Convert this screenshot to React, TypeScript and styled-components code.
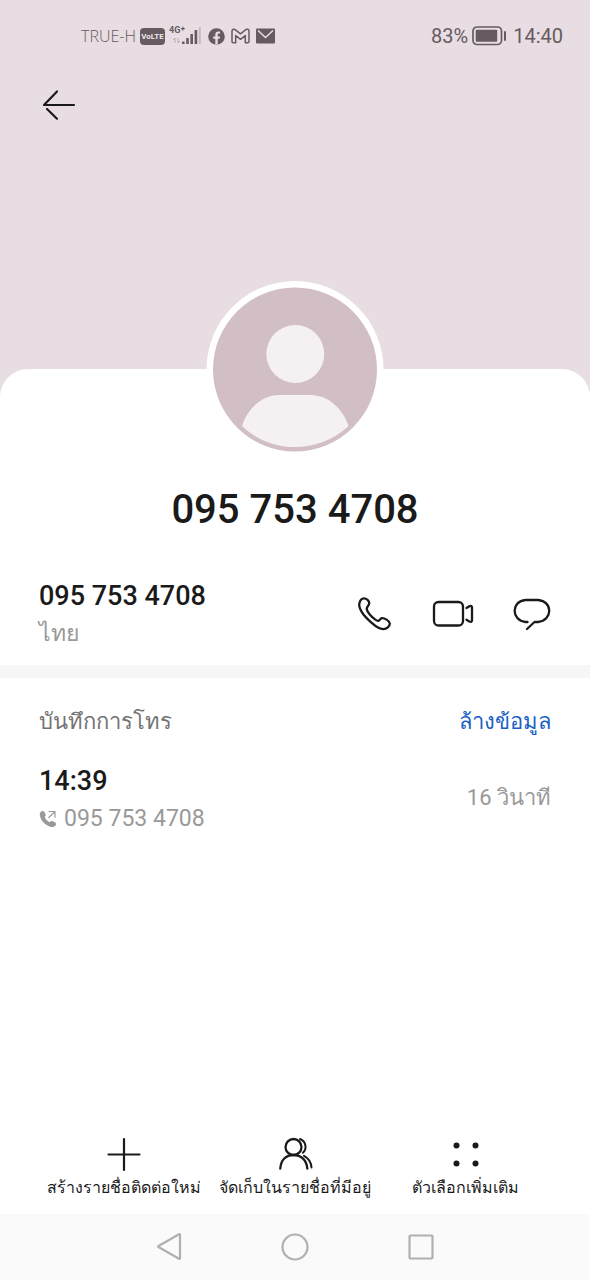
import React from "react";
import styled, { createGlobalStyle } from "styled-components";

const GlobalStyle = createGlobalStyle`
  *, *::before, *::after { box-sizing: border-box; }
  body { margin: 0; background: #fff; }
  button { border: 0; padding: 0; background: none; color: inherit; font: inherit; cursor: pointer; }
  svg { display: block; flex: none; }
`;

const Screen = styled.div`
  min-height: 100vh;
  display: flex;
  flex-direction: column;
  background: #fff;
  color: #1a1a1a;
  font-family: Roboto, "Noto Sans", "Liberation Sans", sans-serif;
`;

const Cover = styled.header`
  height: 397px;
  background: #e8dde3;
`;

const StatusBar = styled.div`
  display: flex;
  justify-content: space-between;
  align-items: center;
  height: 72px;
  padding: 0 27px 0 81px;
  color: #655b60;
`;

const StatusGroup = styled.div<{ $gap: number }>`
  display: flex;
  align-items: center;
  gap: ${({ $gap }) => $gap}px;
`;

const Carrier = styled.span`
  font: 300 16px/20px "Open Sans", "Noto Sans", sans-serif;
`;

const StatusText = styled.span`
  font-size: 20px;
  line-height: 24px;
`;

const VolteBadge = styled.span`
  width: 25px;
  height: 17px;
  border-radius: 4px;
  background: #655b60;
  color: #f1e8ed;
  font: 700 8px/17px Roboto, sans-serif;
  text-align: center;
`;

const BackButton = styled.button`
  display: block;
  margin: 16px 0 0 42px;
`;

const Sheet = styled.main`
  flex: 1;
  display: flex;
  flex-direction: column;
  margin-top: -28px;
  border-radius: 28px 28px 0 0;
  background: #fff;
`;

const Avatar = styled.div`
  align-self: center;
  margin-top: -89px;
  border-radius: 50%;
`;

const Title = styled.h1`
  margin: 28px 0 0;
  font-size: 40px;
  line-height: 48px;
  font-weight: 500;
  text-align: center;
`;

const Row = styled.div<{ $top: number }>`
  display: flex;
  justify-content: space-between;
  align-items: center;
  padding: ${({ $top }) => $top}px 39px 0;
`;

const Stack = styled.div`
  display: flex;
  flex-direction: column;
`;

const Primary = styled.span`
  font-size: 27px;
  line-height: 36px;
  font-weight: 500;
`;

const Secondary = styled.span`
  display: flex;
  align-items: center;
  gap: 7px;
  color: #999;
  font-size: 23px;
  line-height: 40px;
`;

const Duration = styled.span`
  padding-bottom: 6px;
  color: #999;
  font-size: 22px;
  line-height: 36px;
`;

const Actions = styled.div`
  display: flex;
  align-items: center;
  gap: 39px;
  padding-bottom: 4px;
`;

const Divider = styled.hr`
  width: 100%;
  height: 13px;
  margin: 11px 0 0;
  border: 0;
  background: #f6f6f6;
`;

const SectionTitle = styled.h2`
  margin: 0;
  color: #737373;
  font-size: 22px;
  line-height: 36px;
  font-weight: 400;
`;

const ClearButton = styled.button`
  && {
    color: #1861c4;
    font-size: 22px;
    line-height: 36px;
  }
`;

const Toolbar = styled.footer`
  display: grid;
  grid-template-columns: repeat(3, 1fr);
  margin-top: auto;
  padding: 0 39px 14px;
`;

const Tool = styled.button`
  && {
    display: flex;
    flex-direction: column;
    align-items: center;
    gap: 4px;
    font-size: 16px;
    line-height: 24px;
    white-space: nowrap;
  }
`;

const NavBar = styled.nav`
  display: flex;
  justify-content: center;
  gap: 96px;
  height: 66px;
  background: #fafafa;
`;

const line = {
  fill: "none",
  stroke: "currentColor",
  strokeLinecap: "round",
  strokeLinejoin: "round",
} as const;

const Signal = () => (
  <svg width="35" height="22" viewBox="0 0 35 22" fill="currentColor" aria-hidden="true">
    <text x="0" y="8" fontFamily="Roboto, sans-serif" fontSize="9" fontWeight="700">4G</text>
    <path d="M12 3h1.300V1.700h1.200V3h1.300v1.200h-1.300v1.300h-1.200V4.200H12z" />
    <path d="M6 18v-5l-2 2M9 13v5l2-2" fill="none" stroke="#b9adb3" />
    <rect x="13" y="16.500" width="2.600" height="2.500" rx="0.500" />
    <rect x="17.200" y="13" width="2.600" height="6" rx="0.500" />
    <rect x="21.400" y="9" width="2.600" height="10" rx="0.500" />
    <rect x="25.600" y="5" width="2.600" height="14" rx="0.500" />
    <rect x="29.800" y="2" width="2" height="17" rx="0.500" fill="#c6bbc1" />
  </svg>
);

const Facebook = () => (
  <svg width="17" height="17" viewBox="0 0 17 17" aria-hidden="true">
    <circle cx="8.500" cy="8.500" r="8.300" fill="currentColor" />
    <path d="M7.300 16.500v-5.700H5.200V8.500h2.100V6.800c0-2.200 1.200-3.300 3.100-3.300l1.700.1v2h-1c-1 0-1.400.5-1.400 1.300v1.600h2.300l-.4 2.300H9.700v5.700z" fill="#e8dde3" />
  </svg>
);

const Gmail = () => (
  <svg width="19" height="16" viewBox="0 0 19 16" aria-hidden="true">
    <path d="M1 3.300C1 1.200 3 .6 4.500 1.800l5 4 5-4C16 .6 18 1.200 18 3.300v10.200c0 .8-.5 1.300-1.200 1.300h-2.500V7.500l-4.800 3.800-4.800-3.800v7.300H2.200c-.7 0-1.200-.5-1.200-1.300z" {...line} strokeWidth="1.500" />
  </svg>
);

const Mail = () => (
  <svg width="19" height="16" viewBox="0 0 19 16" aria-hidden="true">
    <rect y="0.500" width="19" height="15" rx="1" fill="currentColor" />
    <path d="M2 2.500l7.500 7 7.500-7" fill="none" stroke="#e8dde3" strokeWidth="1.500" />
  </svg>
);

const Battery = () => (
  <svg width="37" height="20" viewBox="0 0 37 20" aria-hidden="true">
    <rect x="1" y="1" width="28.500" height="17.500" rx="4" {...line} strokeWidth="1.700" />
    <rect x="3.700" y="3.800" width="21.500" height="12" rx="1" fill="currentColor" />
    <path d="M33 6v8" {...line} strokeWidth="2" />
  </svg>
);

const PersonPicture = () => (
  <svg width="178" height="178" viewBox="0 0 178 178" role="img" aria-label="Contact">
    <circle cx="89" cy="89.500" r="88.500" fill="#fff" />
    <circle cx="89" cy="89.500" r="82" fill="#d1bfc5" />
    <circle cx="89.300" cy="74" r="29" fill="#f5f0f2" />
    <path d="M36 146C41 129 56 115 73 115h32c17 0 32 14 37.500 31C113 174 65 174 36 146z" fill="#f5f0f2" />
  </svg>
);

const ArrowBack = () => (
  <svg width="34" height="34" viewBox="0 0 34 34" {...line} strokeWidth="2.200" aria-hidden="true">
    <path d="M32 17H2L15 3.500M5 21l10 9.700" />
  </svg>
);

const Phone = () => (
  <svg width="36" height="36" viewBox="0 0 36 36" {...line} strokeWidth="2.300" aria-hidden="true">
    <path d="M2.200 8.300C2.800 4.500 4.600 2.400 7 2.400c2.500 0 5.200 2.300 5.300 4.700 0 2.500-2.700 3.200-2.600 5.700.2 3 5.300 8.500 8.300 10.600 1.400 1 2.300 1.500 3.300 1.400 1.500-.2 2-2.400 3.500-2.700 2.300-.5 7.800 2.800 8 5.400.1 3-3.300 5.700-6.500 5.600-3.800-.1-8-3-11.600-6.200C10.500 23.200 6.500 19 4.700 15.900 3.200 13.200 2 10.500 2.200 8.300z" />
  </svg>
);

const Video = () => (
  <svg width="42" height="36" viewBox="0 0 42 36" {...line} strokeWidth="2.300" aria-hidden="true">
    <rect x="2" y="6" width="29" height="23.500" rx="4.500" />
    <path d="M34.500 12l2.800-1.700q2.700-1 2.700 1.200v12.800q0 2.200-2.700 1.200L34.500 23.700" />
  </svg>
);

const Message = () => (
  <svg width="38" height="36" viewBox="0 0 38 36" {...line} strokeWidth="2.300" aria-hidden="true">
    <path d="M14.500 26H12.500C-2 24.500-2 5 12.500 4h12.500c15 1 15 20.500 0 22h-3.500l-7.500 7" />
  </svg>
);

const OutgoingCall = () => (
  <svg width="18" height="18" viewBox="0 0 18 18" aria-hidden="true">
    <path d="M1.500 2.200C3 .4 4.700.5 5.700 2.500l.9 2c.4 1-.1 1.800-1 2.500.8 2.100 2.700 4.200 5 5.200.8-1 1.700-1.500 2.700-1.100l2.500 1.200c1.700 1 1.800 2.500.2 3.700-1.500 1.200-3.500 1.200-5.500.4C5.900 14.600 2.400 11 1.100 6.500.6 4.800.6 3.500 1.500 2.200z" fill="currentColor" />
    <path d="M9.800 7.500L15.500 2M10 1.500h6v5.700" {...line} strokeWidth="1.200" />
  </svg>
);

const Plus = () => (
  <svg width="36" height="36" viewBox="0 0 36 36" {...line} strokeWidth="2.200" aria-hidden="true">
    <path d="M18 3v31M2.500 18.500h31" />
  </svg>
);

const People = () => (
  <svg width="36" height="36" viewBox="0 0 36 36" {...line} strokeWidth="2.300" aria-hidden="true">
    <circle cx="16.500" cy="11" r="8" />
    <path d="M3.300 32.500C3.800 24 9 19 16.500 19S29.800 24 30.300 32.500" />
    <path d="M23 3c6.500 2.500 7 10.500 2.800 13.800M27 19.800c4.500 2.400 7.200 6.700 7.500 11.700" strokeWidth="2" />
  </svg>
);

const MoreDots = () => (
  <svg width="36" height="36" viewBox="0 0 36 36" fill="currentColor" aria-hidden="true">
    <circle cx="8.500" cy="9.500" r="3" />
    <circle cx="27.500" cy="9.500" r="3" />
    <circle cx="8.500" cy="27.500" r="3" />
    <circle cx="27.500" cy="27.500" r="3" />
  </svg>
);

const navShapes = [
  { name: "Back", shape: <path d="M4.500 14L25 2.200q1-.5 1 .8v23q0 1.300-1 .8L4.500 15q-1-.5 0-1z" /> },
  { name: "Home", shape: <circle cx="15" cy="15" r="12.500" /> },
  { name: "Recents", shape: <rect x="3.500" y="3.500" width="23" height="23" rx="1" /> },
];

const tools = [
  { label: "สร้างรายชื่อติดต่อใหม่", icon: <Plus /> },
  { label: "จัดเก็บในรายชื่อที่มีอยู่", icon: <People /> },
  { label: "ตัวเลือกเพิ่มเติม", icon: <MoreDots /> },
];

const PHONE = "095 753 4708";

export default function App() {
  return (
    <Screen>
      <GlobalStyle />
      <Cover>
        <StatusBar>
          <StatusGroup $gap={4}>
            <Carrier>TRUE-H</Carrier>
            <VolteBadge>VoLTE</VolteBadge>
            <Signal />
            <StatusGroup $gap={6}>
              <Facebook />
              <Gmail />
              <Mail />
            </StatusGroup>
          </StatusGroup>
          <StatusGroup $gap={4}>
            <StatusText>83%</StatusText>
            <Battery />
            <StatusText>14:40</StatusText>
          </StatusGroup>
        </StatusBar>
        <BackButton aria-label="Back">
          <ArrowBack />
        </BackButton>
      </Cover>
      <Sheet>
        <Avatar>
          <PersonPicture />
        </Avatar>
        <Title>{PHONE}</Title>
        <Row $top={44}>
          <Stack>
            <Primary>{PHONE}</Primary>
            <Secondary>ไทย</Secondary>
          </Stack>
          <Actions>
            <button aria-label="Call"><Phone /></button>
            <button aria-label="Video call"><Video /></button>
            <button aria-label="Message"><Message /></button>
          </Actions>
        </Row>
        <Divider />
        <Row $top={26}>
          <SectionTitle>บันทึกการโทร</SectionTitle>
          <ClearButton>ล้างข้อมูล</ClearButton>
        </Row>
        <Row $top={23}>
          <Stack>
            <Primary>14:39</Primary>
            <Secondary>
              <OutgoingCall />
              {PHONE}
            </Secondary>
          </Stack>
          <Duration>16 วินาที</Duration>
        </Row>
        <Toolbar>
          {tools.map(({ label, icon }) => (
            <Tool key={label}>
              {icon}
              {label}
            </Tool>
          ))}
        </Toolbar>
      </Sheet>
      <NavBar>
        {navShapes.map(({ name, shape }) => (
          <button key={name} aria-label={name}>
            <svg width="30" height="30" viewBox="0 0 30 30" {...line} stroke="#b0b0b0" strokeWidth="2.200">
              {shape}
            </svg>
          </button>
        ))}
      </NavBar>
    </Screen>
  );
}
